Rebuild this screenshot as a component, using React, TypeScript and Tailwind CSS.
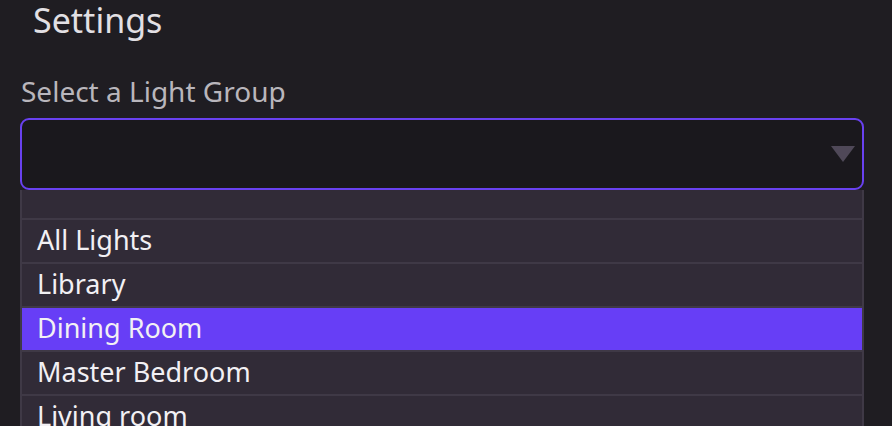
const GROUPS = ["All Lights", "Library", "Dining Room", "Master Bedroom", "Living room"];

export default function App() {
  const selected = "Dining Room";

  return (
    <div
      className="h-[426px] overflow-hidden bg-[#1f1d22] pl-[20px] pr-[28px]"
      style={{ fontFamily: '"Noto Sans", "Open Sans", sans-serif' }}
    >
      <h1 className="mt-[3px] pl-[13px] text-[34px] leading-[34px] text-[#e2e0e4]">Settings</h1>

      <label className="mt-[40px] block pl-[1px] text-[28px] leading-[28px] text-[#b9b6bc]">
        Select a Light Group
      </label>

      {/* Select box */}
      <div className="mt-[13px] flex h-[72px] items-center justify-end rounded-[9px] border-2 border-[#6941f0] bg-[#1a181d] pr-[7px]">
        <svg width="24" height="16" viewBox="0 0 24 16">
          <polygon points="0,0 24,0 12,16" fill="#4f4858" />
        </svg>
      </div>

      {/* Options list */}
      <div className="border-x-2 border-[#3f3946] bg-[#3f3946]">
        <div className="h-[28px] bg-[#312b37]" />
        {GROUPS.map((g) => (
          <div
            key={g}
            className={`mt-[2px] flex h-[42px] items-center pb-[4px] pl-[15px] text-[27px] leading-[27px] text-[#f2f0f4] ${
              g === selected ? "bg-[#673ef6]" : "bg-[#312b37]"
            }`}
          >
            {g}
          </div>
        ))}
      </div>
    </div>
  );
}
